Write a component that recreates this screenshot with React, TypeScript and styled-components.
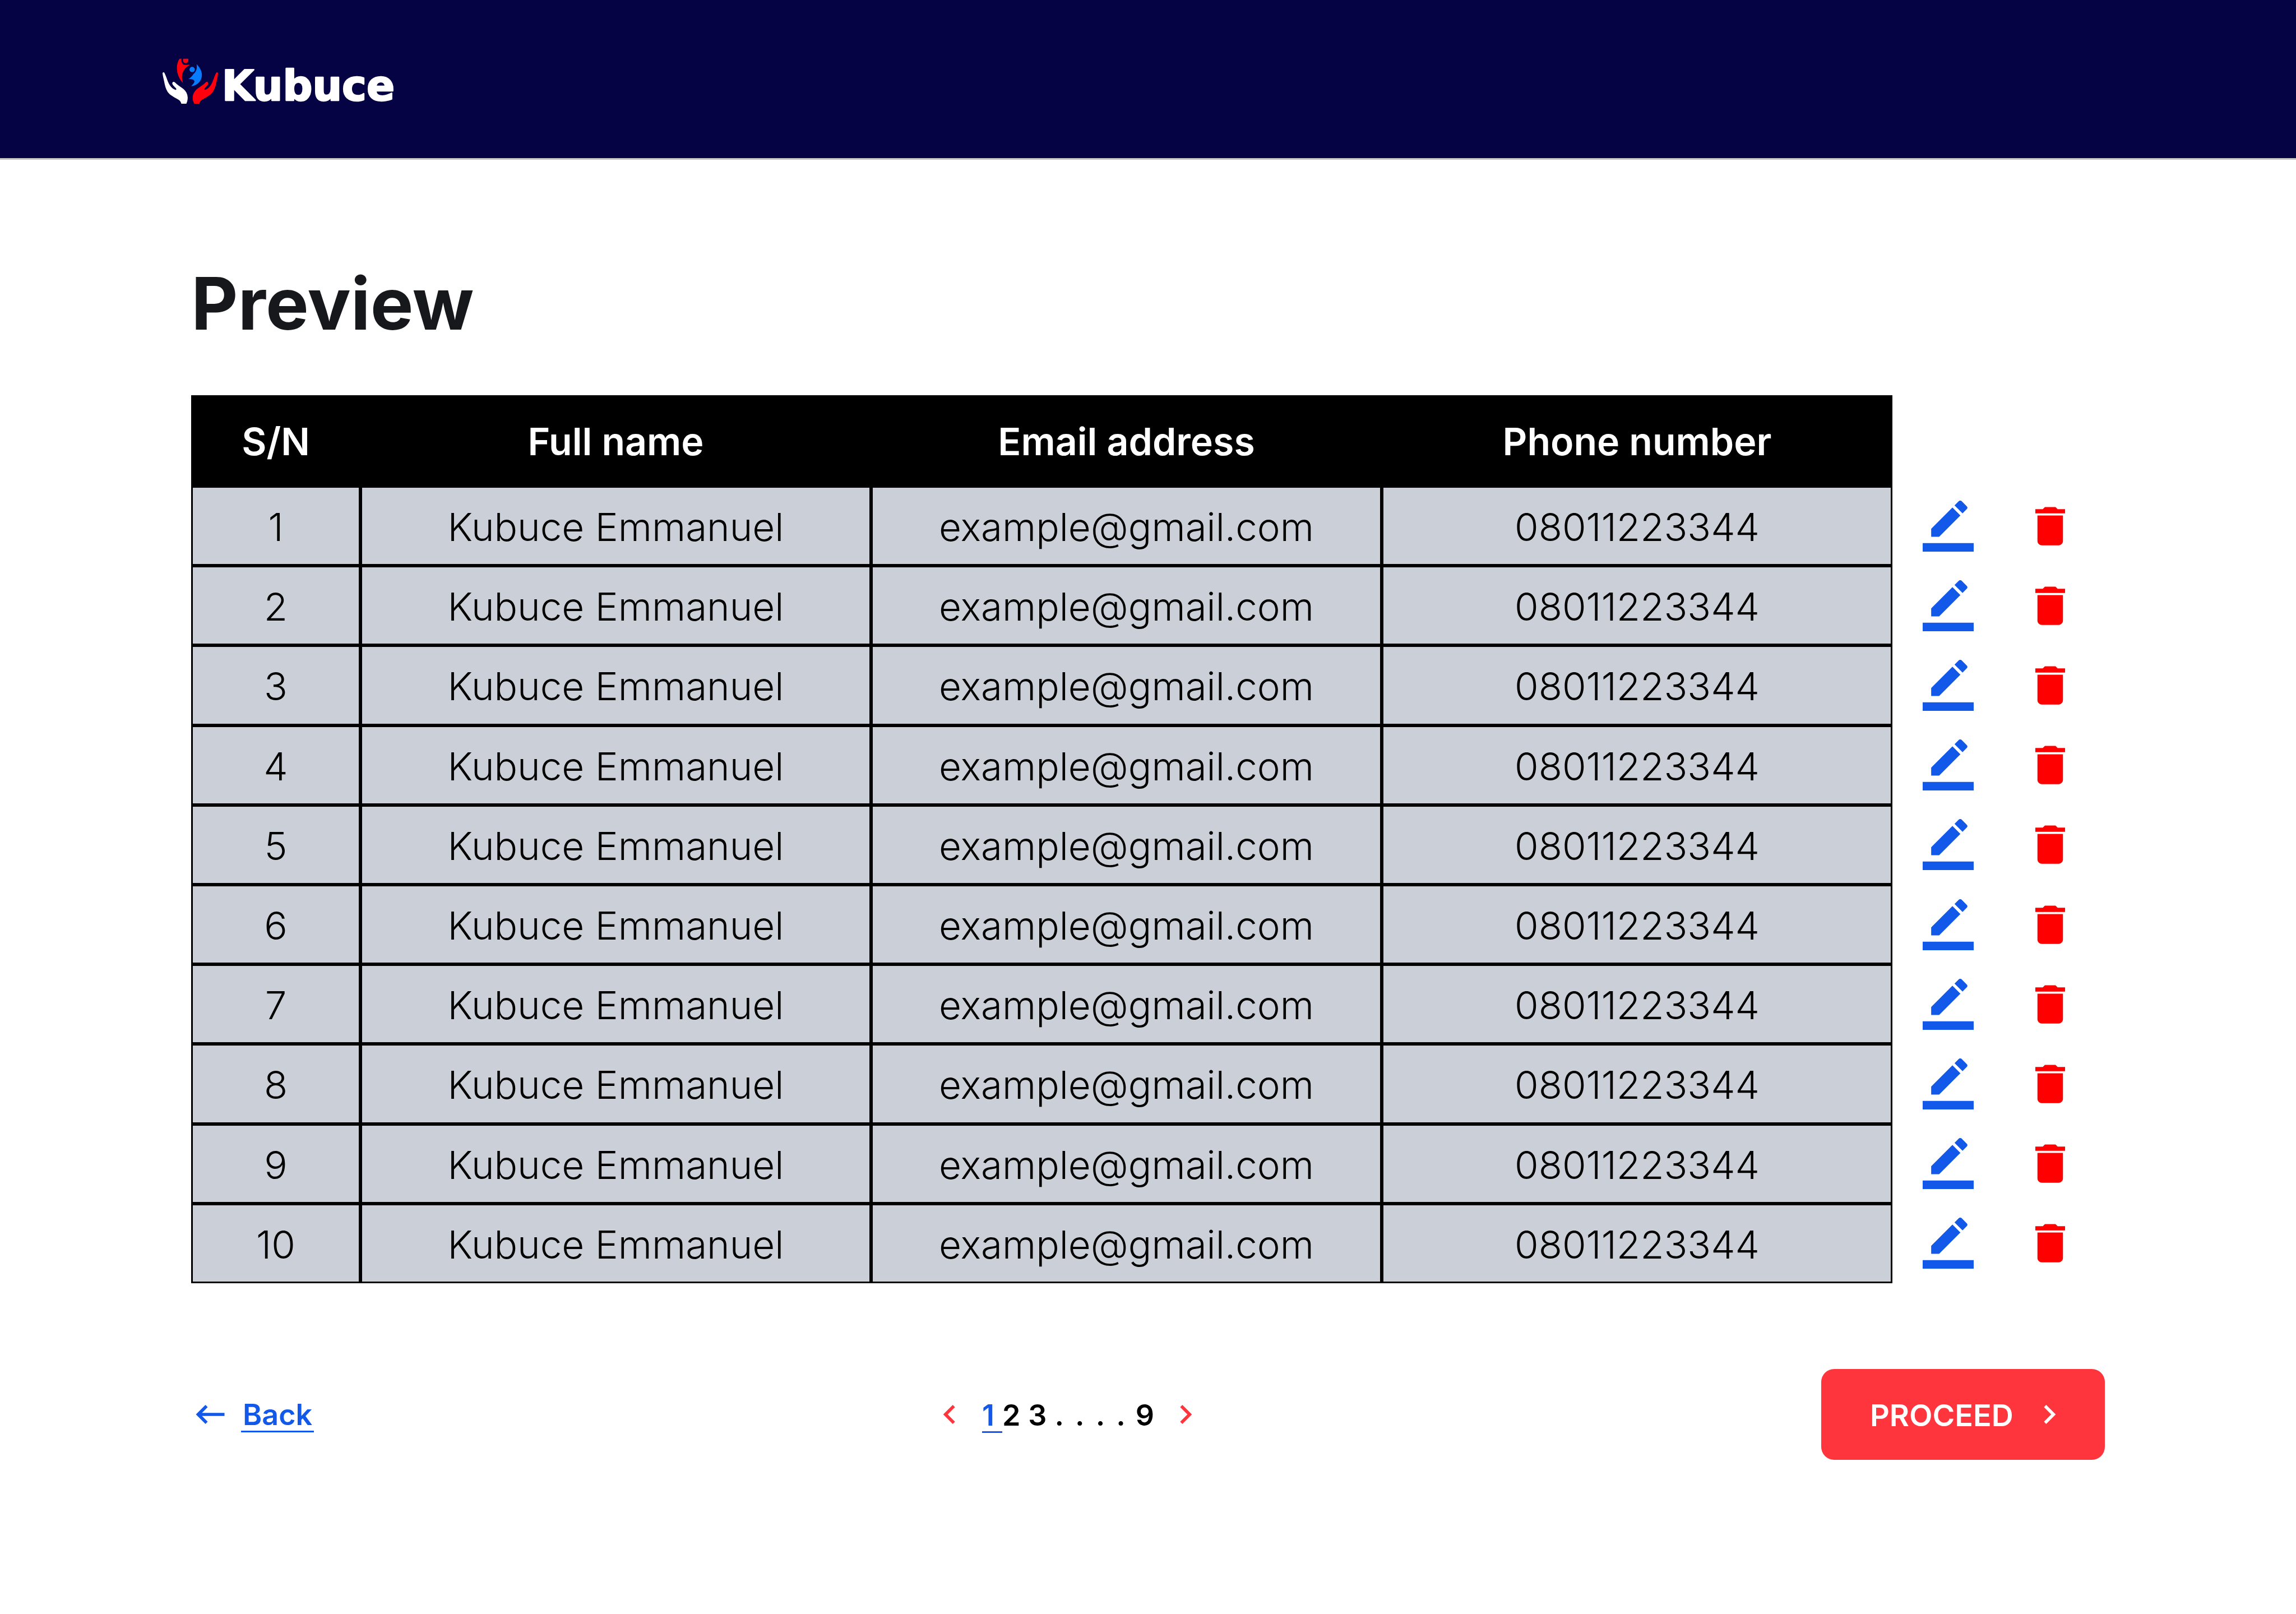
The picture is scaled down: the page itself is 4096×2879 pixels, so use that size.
import React from "react";
import styled, { createGlobalStyle } from "styled-components";
import {
  MdChevronLeft,
  MdChevronRight,
  MdDelete,
  MdKeyboardBackspace,
} from "react-icons/md";

const colors = {
  navy: "#050344",
  blue: "#1259ea",
  red: "#ff353d",
  danger: "#ff0000",
  ink: "#17181c",
  cell: "#cbd0d8",
};

const GlobalStyle = createGlobalStyle`
  *, *::before, *::after { box-sizing: border-box; }
  body {
    margin: 0;
    background: #ffffff;
    color: #000000;
    font-family: Inter, "Open Sans", "Liberation Sans", sans-serif;
  }
  button, a { font: inherit; color: inherit; }
  button { border: 0; padding: 0; background: none; cursor: pointer; }
`;

const Header = styled.header`
  padding: 92px 290px 84px;
  background: ${colors.navy};
  border-bottom: 3px solid #c6c6c6;
`;

const HomeLink = styled.a`
  display: block;
  width: 438px;
`;

const LogoArt = styled.svg`
  display: block;
  width: 100%;
  height: 106px;
  overflow: visible;
`;

const LogoText = styled.text`
  font-family: "DejaVu Sans", sans-serif;
  font-size: 234px;
  font-weight: 700;
  fill: #ffffff;
  stroke: #ffffff;
  stroke-width: 8px;
  stroke-linejoin: round;
`;

const Main = styled.main`
  padding: 176px 341px 0;
`;

const Title = styled.h1`
  margin: 0 0 84px;
  font-size: 129px;
  line-height: 160px;
  font-weight: 700;
  color: ${colors.ink};
`;

const Table = styled.table`
  width: 100%;
  height: 1584px;
  table-layout: fixed;
  border-collapse: separate;
  border-spacing: 0;
  font-size: 69px;
  line-height: 84px;
  text-align: center;
`;

const Column = styled.col<{ $width?: number }>`
  width: ${(p) => (p.$width ? `${p.$width}px` : "auto")};
`;

const HeadCell = styled.th`
  height: 162px;
  padding: 2px 0 0;
  background: #000000;
  color: #ffffff;
  font-size: 68px;
  font-weight: 600;
`;

const Cell = styled.td`
  height: 142px;
  padding: 4px 0 0;
  border: 3px solid #000000;
  background: ${colors.cell};
  font-weight: 350;
`;

const ActionCell = styled.td`
  padding: 0 0 0 54px;
`;

const Actions = styled.div`
  display: flex;
  gap: 91px;
`;

const IconButton = styled.button<{ $color: string }>`
  display: flex;
  font-size: 91px;
  color: ${(p) => p.$color};
`;

const Footer = styled.div`
  display: flex;
  align-items: center;
  justify-content: space-between;
  margin-top: 153px;
  font-size: 52px;
  line-height: 56px;
  font-weight: 600;
`;

const BackLink = styled.a`
  display: flex;
  align-items: center;
  gap: 21px;
  color: ${colors.blue};
  text-decoration: none;
`;

const Glyph = styled.span`
  display: flex;
  font-size: 68px;
`;

const BackLabel = styled.span`
  margin-top: 4px;
  padding: 0 3px;
  border-bottom: 3px solid currentColor;
`;

const Pager = styled.nav`
  display: flex;
  align-items: center;
`;

const StepButton = styled.button`
  display: flex;
  font-size: 68px;
  color: ${colors.red};
`;

const Pages = styled.div`
  display: flex;
  margin: 6px 8px 0 24px;
`;

const PageButton = styled.button<{ $current?: boolean }>`
  padding-right: 14px;
  border-bottom: 3px solid ${(p) => (p.$current ? "currentColor" : "transparent")};
  color: ${(p) => (p.$current ? colors.blue : "#000000")};
`;

const Ellipsis = styled.span`
  display: flex;
  gap: 20px;
  padding-right: 18px;
`;

const ProceedButton = styled.button`
  display: flex;
  align-items: center;
  justify-content: space-between;
  min-width: 506px;
  height: 162px;
  padding: 0 65px 0 87px;
  border-radius: 23px;
  background: ${colors.red};
  color: #ffffff;
  font-size: 54px;
`;

const ProceedLabel = styled.span`
  padding-top: 4px;
`;

const people = Array.from({ length: 10 }, (_, i) => ({
  sn: i + 1,
  name: "Kubuce Emmanuel",
  email: "example@gmail.com",
  phone: "08011223344",
}));

function Logo() {
  return (
    <LogoArt viewBox="48 22 1386 335" role="img" aria-label="Kubuce">
      <path
        fill="#ffffff"
        d="M48 144C49 137 56 137 59 143C69 162 76 192 89 212C97 224 108 235 121 238C128 238 127 232 121 226C112 217 101 206 103 199C105 191 112 191 117 195C132 211 151 221 166 233C181 246 189 262 190 281C190 294 187 306 182 316H154C151 307 147 300 140 295C120 282 91 271 77 250C66 232 61 212 57 190C53 172 49 158 48 144Z"
      />
      <path
        fill="#ff000c"
        d="M361 144C360 137 353 137 350 143C340 162 333 192 320 212C312 224 301 235 288 238C282 238 283 232 289 226C298 217 307 207 306 199C304 191 297 191 292 195C277 211 258 221 243 233C228 246 219 262 218 281C218 294 221 306 227 316H256C258 307 263 300 270 295C290 282 318 271 332 250C343 232 349 212 353 190C357 172 361 158 361 144Z"
      />
      <path
        fill="#ff000c"
        d="M144 62H155C153 80 158 97 176 97C184 97 193 95 202 97C176 111 158 135 158 165C158 177 160 187 163 199C142 176 129 148 129 113C129 94 134 76 144 62ZM165 62H193C197 75 189 87 178 87C167 87 160 75 165 62Z"
      />
      <circle cx="215" cy="123" r="15" fill="#087cff" />
      <path
        fill="#087cff"
        d="M240 93C256 109 270 130 270 153C270 187 246 211 210 218C218 206 227 200 228 190C227 178 210 177 193 176C207 170 215 160 222 149C237 137 245 118 240 93Z"
      />
      <LogoText x="383" y="296">
        Kubuce
      </LogoText>
    </LogoArt>
  );
}

function EditIcon() {
  return (
    <svg viewBox="0 0 24 24" width="1em" height="1em" fill="currentColor" aria-hidden="true">
      <path d="M17.75 7 14 3.25l-10 10V17h3.75l10-10zm2.96-2.96a.996.996 0 0 0 0-1.41L18.37.29a.996.996 0 0 0-1.41 0L15 2.25 18.75 6l1.96-1.96z" />
      <path d="M0 20h24v4H0z" />
    </svg>
  );
}

export default function App() {
  return (
    <>
      <GlobalStyle />
      <Header>
        <HomeLink href="#">
          <Logo />
        </HomeLink>
      </Header>
      <Main>
        <Title>Preview</Title>
        <Table>
          <colgroup>
            <Column $width={302} />
            <Column />
            <Column />
            <Column />
            <Column $width={379} />
          </colgroup>
          <thead>
            <tr>
              <HeadCell scope="col">S/N</HeadCell>
              <HeadCell scope="col">Full name</HeadCell>
              <HeadCell scope="col">Email address</HeadCell>
              <HeadCell scope="col">Phone number</HeadCell>
              <td />
            </tr>
          </thead>
          <tbody>
            {people.map((person) => (
              <tr key={person.sn}>
                <Cell>{person.sn}</Cell>
                <Cell>{person.name}</Cell>
                <Cell>{person.email}</Cell>
                <Cell>{person.phone}</Cell>
                <ActionCell>
                  <Actions>
                    <IconButton $color={colors.blue} aria-label={`Edit row ${person.sn}`}>
                      <EditIcon />
                    </IconButton>
                    <IconButton $color={colors.danger} aria-label={`Delete row ${person.sn}`}>
                      <MdDelete />
                    </IconButton>
                  </Actions>
                </ActionCell>
              </tr>
            ))}
          </tbody>
        </Table>
        <Footer>
          <BackLink href="#">
            <Glyph>
              <MdKeyboardBackspace />
            </Glyph>
            <BackLabel>Back</BackLabel>
          </BackLink>
          <Pager aria-label="Pages">
            <StepButton aria-label="Previous page">
              <MdChevronLeft />
            </StepButton>
            <Pages>
              <PageButton $current aria-current="page">
                1
              </PageButton>
              <PageButton>2</PageButton>
              <PageButton>3</PageButton>
              <Ellipsis>
                <span>.</span>
                <span>.</span>
                <span>.</span>
                <span>.</span>
              </Ellipsis>
              <PageButton>9</PageButton>
            </Pages>
            <StepButton aria-label="Next page">
              <MdChevronRight />
            </StepButton>
          </Pager>
          <ProceedButton>
            <ProceedLabel>PROCEED</ProceedLabel>
            <MdChevronRight size={68} />
          </ProceedButton>
        </Footer>
      </Main>
    </>
  );
}
